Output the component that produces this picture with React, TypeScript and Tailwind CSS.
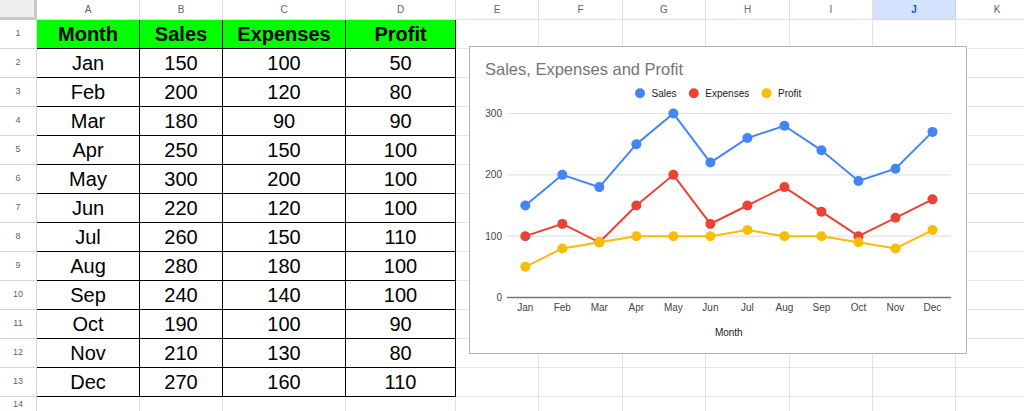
import React from 'react'

const months = ['Jan', 'Feb', 'Mar', 'Apr', 'May', 'Jun', 'Jul', 'Aug', 'Sep', 'Oct', 'Nov', 'Dec']
const sales = [150, 200, 180, 250, 300, 220, 260, 280, 240, 190, 210, 270]
const expenses = [100, 120, 90, 150, 200, 120, 150, 180, 140, 100, 130, 160]
const profit = [50, 80, 90, 100, 100, 100, 110, 100, 100, 90, 80, 110]

const letters = ['A', 'B', 'C', 'D', 'E', 'F', 'G', 'H', 'I', 'J', 'K']

const series = [
    { name: 'Sales', color: '#4285f4', data: sales },
    { name: 'Expenses', color: '#ea4335', data: expenses },
    { name: 'Profit', color: '#fbbc04', data: profit },
]

// chart geometry, relative to the inner box at (470, 47)
const plotLeft = 36.8
const plotRight = 481
const step = (plotRight - plotLeft) / 12
const cx = (i: number) => plotLeft + step * (i + 0.5)
const cy = (v: number) => 250.5 - v * 0.6133

const Chart = () => (
    <div className="absolute left-[469px] top-[46px] w-[498px] h-[308px] border border-[#b4b4b4] bg-white">
        <svg width="496" height="306" className="block" style={{ fontFamily: '"Liberation Sans", Arial, sans-serif' }}>
            <text x="15" y="28" fontSize="16.5" fill="#757575">Sales, Expenses and Profit</text>

            {series.map((s, i) => {
                const dotX = [170, 223.8, 296.5][i]
                return (
                    <g key={s.name}>
                        <circle cx={dotX} cy="46.3" r="5" fill={s.color} />
                        <text x={dotX + 11.5} y="49.8" fontSize="10" fill="#222">{s.name}</text>
                    </g>
                )
            })}

            {[100, 200, 300].map((v) => (
                <line key={v} x1={plotLeft} x2={plotRight} y1={cy(v)} y2={cy(v)} stroke="#e3e3e3" strokeWidth="1.2" />
            ))}
            {[0, 100, 200, 300].map((v) => (
                <text key={v} x="32" y={cy(v) + 3.5} fontSize="10" fill="#444" textAnchor="end">{v}</text>
            ))}
            <line x1={plotLeft} x2={plotRight} y1={cy(0)} y2={cy(0)} stroke="#777" strokeWidth="1.4" />

            {months.map((m, i) => (
                <text key={m} x={cx(i)} y="263.8" fontSize="10" fill="#444" textAnchor="middle">{m}</text>
            ))}
            <text x="258.8" y="288.5" fontSize="10" fill="#222" textAnchor="middle">Month</text>

            {series.map((s) => (
                <g key={s.name}>
                    <polyline
                        points={s.data.map((v, i) => `${cx(i)},${cy(v)}`).join(' ')}
                        fill="none"
                        stroke={s.color}
                        strokeWidth="2"
                    />
                    {s.data.map((v, i) => (
                        <circle key={i} cx={cx(i)} cy={cy(v)} r="5" fill={s.color} />
                    ))}
                </g>
            ))}
        </svg>
    </div>
)

export default function App() {
    const rows = Array.from({ length: 14 }, (_, i) => i + 1)

    return (
        <div
            className="relative w-[1024px] h-[411px] overflow-hidden bg-white"
            style={{ fontFamily: '"Liberation Sans", Arial, sans-serif' }}
        >
            <div className="grid grid-cols-[37px_103px_83px_123px_110px_83px_84px_83px_84px_83px_83px_83px] grid-rows-[20px_repeat(13,29px)_17px]">
                <div className="bg-[#eeeeee] border-r-[3px] border-b-[3px] border-[#c9c9c9]" />
                {letters.map((l) => (
                    <div
                        key={l}
                        className={
                            l === 'J'
                                ? 'flex items-center justify-center border-r border-b border-[#d6d6d6] bg-[#d3e3fd] text-[10px] font-bold text-[#0b57d0]'
                                : 'flex items-center justify-center border-r border-b border-[#e0e0e0] text-[10px] text-[#5f6368]'
                        }
                    >
                        {l}
                    </div>
                ))}

                {rows.map((r) => (
                    <React.Fragment key={r}>
                        <div className="flex items-center justify-center border-r border-b border-[#d6d6d6] text-[9px] text-[#5f6368]">
                            {r}
                        </div>
                        {letters.map((l, c) => {
                            if (r <= 13 && c < 4) {
                                let value: string | number
                                if (r === 1) value = ['Month', 'Sales', 'Expenses', 'Profit'][c]
                                else value = [months, sales, expenses, profit][c][r - 2]
                                return (
                                    <div
                                        key={l}
                                        className={
                                            r === 1
                                                ? 'flex items-center justify-center border-r border-b border-black bg-[#00ff00] text-[20px] font-bold text-black'
                                                : 'flex items-center justify-center border-r border-b border-black text-[20px] text-black'
                                        }
                                    >
                                        {value}
                                    </div>
                                )
                            }
                            return <div key={l} className="border-r border-b border-[#e2e2e2]" />
                        })}
                    </React.Fragment>
                ))}
            </div>

            <Chart />
        </div>
    )
}
